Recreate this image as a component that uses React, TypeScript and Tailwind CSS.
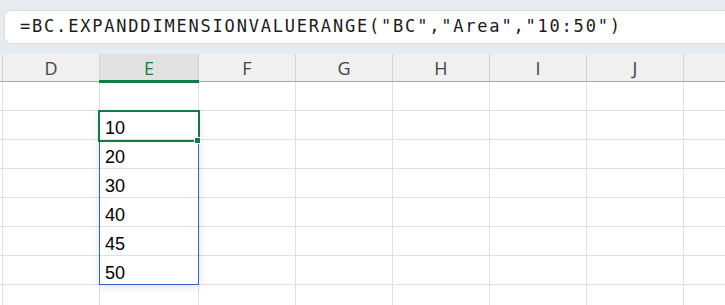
const COLS = ["D", "E", "F", "G", "H", "I", "J", ""];
const VALUES = ["", "10", "20", "30", "40", "45", "50", ""];

function colWidth(c: string) {
  return c === "E" ? "w-[99px]" : "w-[97px]";
}

export default function App() {
  return (
    <div className="w-[725px] h-[305px] overflow-hidden bg-white font-['Liberation_Sans',Arial,sans-serif]">
      {/* formula bar */}
      <div className="h-[54px] bg-[#e7eaef] pt-[10px] pl-[4px]">
        <div className="h-[34px] w-[780px] bg-white rounded-[7px] border border-[#d9dce1] flex items-center pl-[15px]">
          <span className="font-['DejaVu_Sans_Mono',monospace] text-[17px] tracking-[1.8px] text-[#1b1b1b]">
            =BC.EXPANDDIMENSIONVALUERANGE("BC","Area","10:50")
          </span>
        </div>
      </div>

      {/* grid */}
      <div className="relative">
        <div className="flex h-[28px] bg-[#f0f0f0] border-b border-[#a8a8a8]">
          <div className="w-[3px] shrink-0 border-r border-[#d4d4d4]" />
          {COLS.map((c, i) =>
            c === "E" ? (
              <div
                key={i}
                className="w-[99px] shrink-0 border-r border-[#d4d4d4] bg-[#e1e1e1] text-[#137b45] flex items-center justify-center text-[18px] font-['Open_Sans',sans-serif] leading-none"
              >
                {c}
              </div>
            ) : (
              <div
                key={i}
                className="w-[97px] shrink-0 border-r border-[#d4d4d4] text-[#444] flex items-center justify-center text-[18px] font-['Open_Sans',sans-serif] leading-none"
              >
                {c}
              </div>
            )
          )}
        </div>

        {VALUES.map((v, r) => (
          <div key={r} className="flex h-[29px] border-b border-[#e0e0e0]">
            <div className="w-[3px] shrink-0 border-r border-[#e0e0e0]" />
            {COLS.map((c, i) => (
              <div
                key={i}
                className={`${colWidth(c)} shrink-0 border-r border-[#e0e0e0] pl-[5px] pt-[8px] text-[18px] leading-none text-black`}
              >
                {c === "E" ? v : ""}
              </div>
            ))}
          </div>
        ))}

        {/* selected column header underline */}
        <div className="absolute left-[99px] top-[26px] w-[100px] h-[3px] bg-[#137b45]" />
        {/* spill range border */}
        <div className="absolute left-[99px] top-[56px] w-[100px] h-[175px] border border-[#2767c2] shadow-[0_2px_8px_rgba(0,0,0,0.12)]" />
        {/* active cell */}
        <div className="absolute left-[98px] top-[56px] w-[102px] h-[32px] border-2 border-[#137b45]" />
        {/* fill handle */}
        <div className="absolute left-[194px] top-[83px] w-[7px] h-[7px] bg-[#137b45] border border-white" />
      </div>
    </div>
  );
}
